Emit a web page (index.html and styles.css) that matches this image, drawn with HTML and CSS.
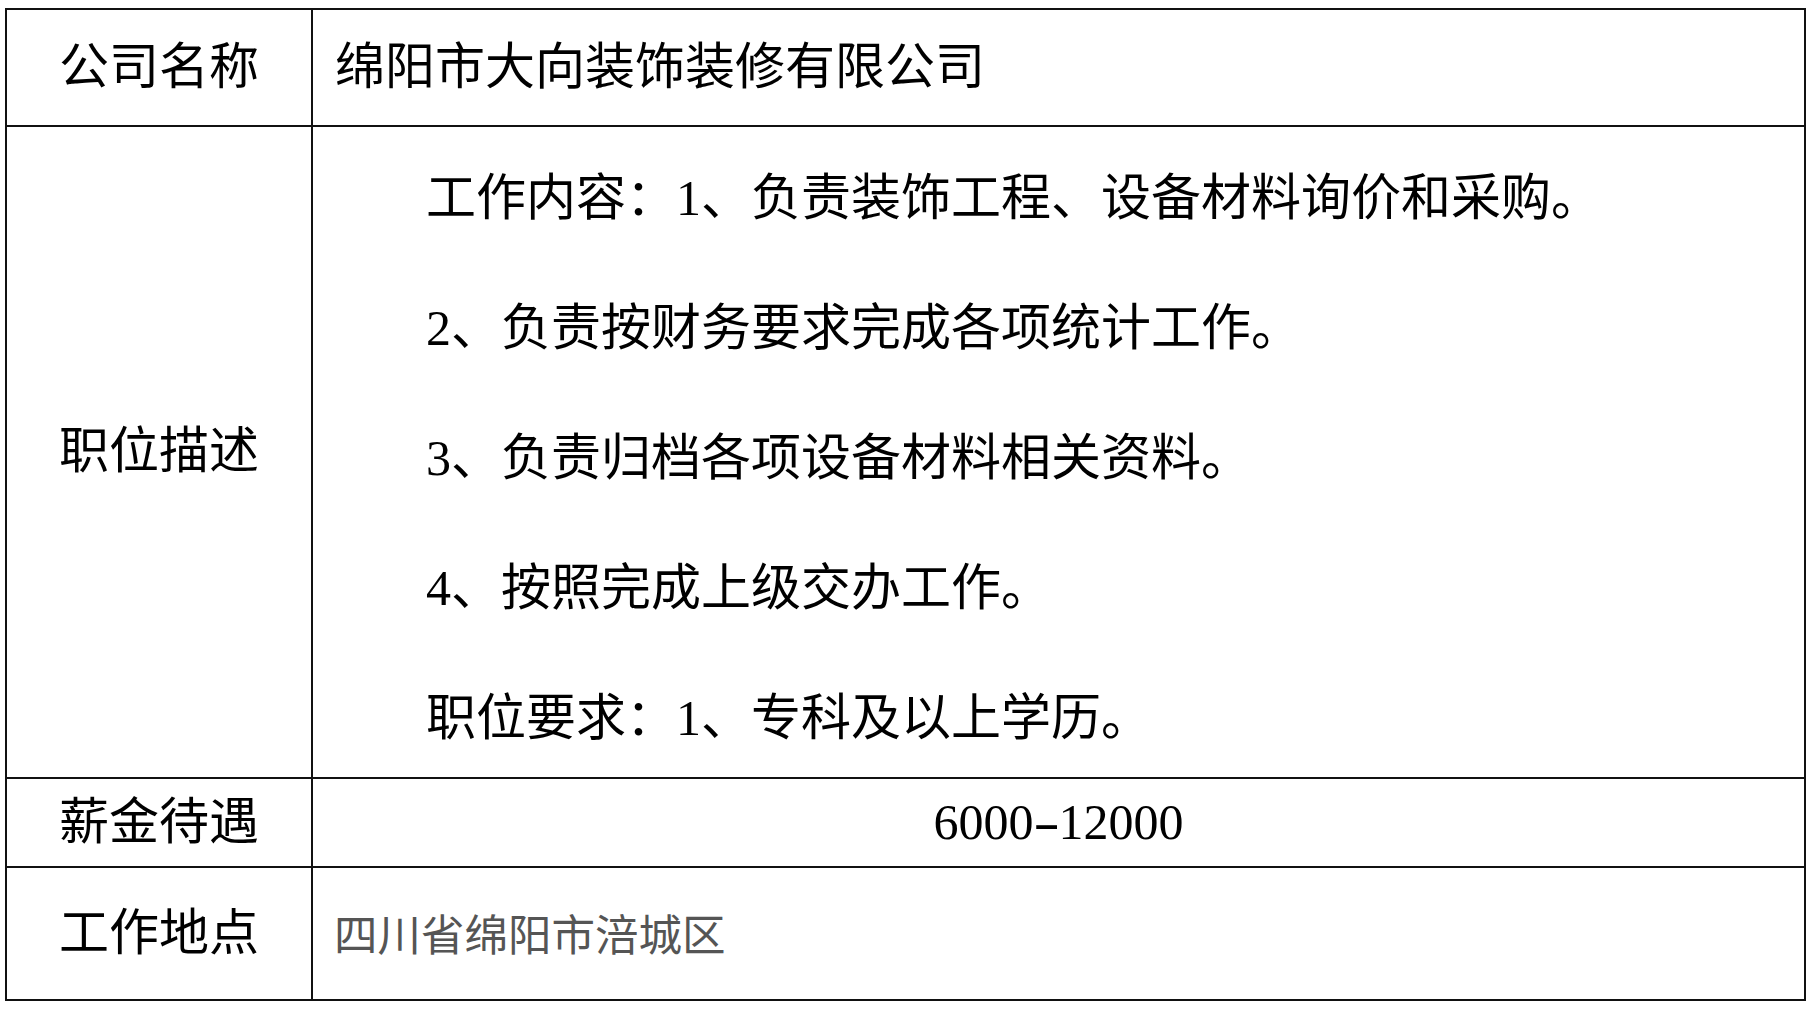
FILE: index.html
```html
<!DOCTYPE html>
<html lang="zh-CN">
<head>
<meta charset="utf-8">
<title>职位信息</title>
<link rel="stylesheet" href="styles.css">
</head>
<body>
<div class="sheet">
  <div class="cell label row-name">公司名称</div>
  <div class="cell value row-name">绵阳市大向装饰装修有限公司</div>

  <div class="cell label row-desc">职位描述</div>
  <div class="cell desc row-desc">
    <p>工作内容：1、负责装饰工程、设备材料询价和采购。</p>
    <p>2、负责按财务要求完成各项统计工作。</p>
    <p>3、负责归档各项设备材料相关资料。</p>
    <p>4、按照完成上级交办工作。</p>
    <p>职位要求：1、专科及以上学历。</p>
  </div>

  <div class="cell label row-pay">薪金待遇</div>
  <div class="cell value center row-pay">6000<span class="dash">-</span>12000</div>

  <div class="cell label row-place last">工作地点</div>
  <div class="cell value gray row-place last">四川省绵阳市涪城区</div>
</div>
</body>
</html>
```

FILE: styles.css
```css
* { box-sizing: border-box; }

html, body {
  margin: 0;
  padding: 0;
  background: #ffffff;
}

body {
  font-family: "Liberation Serif", "Noto Sans CJK SC", serif;
  color: #000;
}

.sheet {
  margin: 8px 0 0 5px;
  width: 1801px;
  height: 993px;
  border: 2px solid #111;
  display: grid;
  grid-template-columns: 306px 1fr;
  grid-template-rows: 117px 652px 89px 131px;
}

.cell {
  border-bottom: 2px solid #111;
  display: flex;
  align-items: center;
  font-size: 50px;
  line-height: 1;
}

.cell.last { border-bottom: none; }

.label {
  border-right: 2px solid #111;
  justify-content: center;
  padding-bottom: 2px;
}

.value {
  padding-left: 22px;
  padding-bottom: 2px;
}

.center {
  justify-content: center;
  padding-left: 0;
}

.dash {
  display: inline-block;
  width: 0.5em;
  text-align: center;
  transform: scaleX(1.6);
}

.gray {
  color: #555;
  font-family: "Noto Sans CJK SC", sans-serif;
  font-size: 43.5px;
  padding-left: 21px;
}

.desc {
  flex-direction: column;
  align-items: flex-start;
  justify-content: flex-start;
  padding: 6px 0 0 113px;
}

.desc p {
  margin: 0;
  height: 130px;
  line-height: 130px;
  font-size: 50px;
  white-space: nowrap;
}
```
